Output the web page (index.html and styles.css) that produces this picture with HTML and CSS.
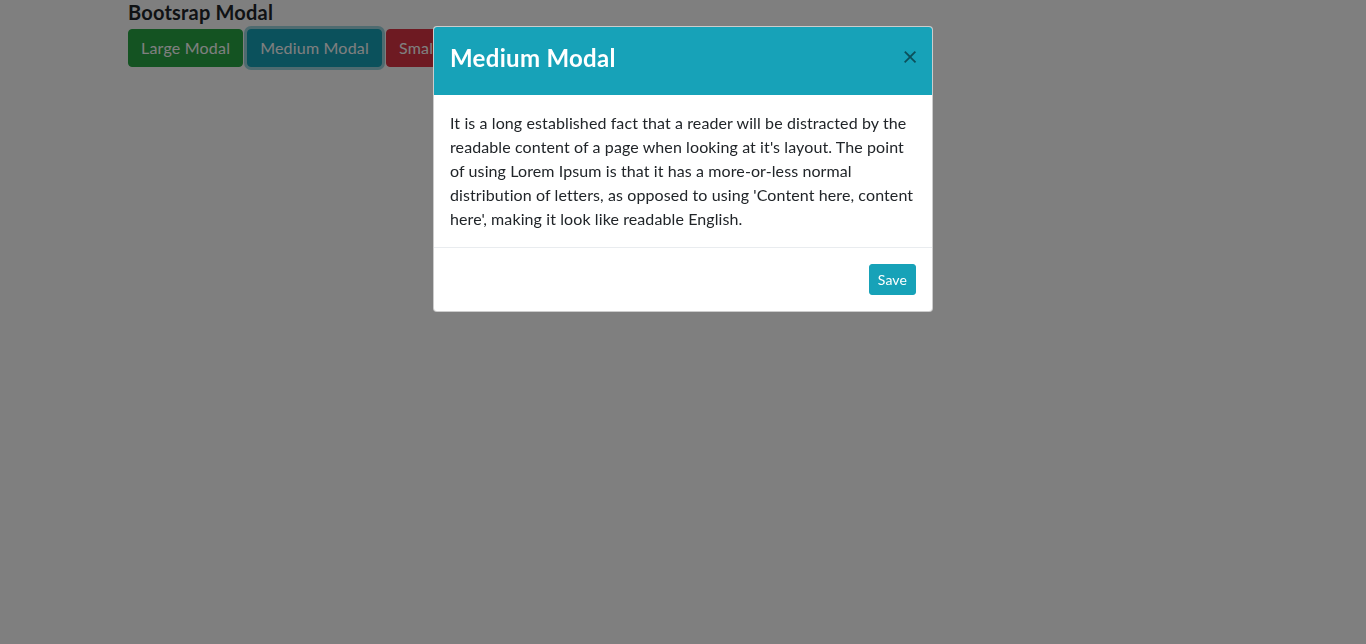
FILE: index.html
```html
<!DOCTYPE html>
<html lang="en">
<head>
<meta charset="utf-8">
<title>Bootstrap Modal</title>
<link rel="stylesheet" href="styles.css">
</head>
<body>
<div class="container">
  <h5 class="page-title">Bootsrap Modal</h5>
  <div class="btn-row">
    <button class="btn btn-success">Large Modal</button>
    <button class="btn btn-info focused">Medium Modal</button>
    <button class="btn btn-danger">Small Modal</button>
  </div>
</div>
<div class="backdrop"></div>
<div class="modal">
  <div class="modal-dialog">
    <div class="modal-content">
      <div class="modal-header">
        <h4 class="modal-title">Medium Modal</h4>
        <button class="close" aria-label="Close">&times;</button>
      </div>
      <div class="modal-body">
        <p>It is a long established fact that a reader will be distracted by the readable content of a page when looking at it's layout. The point of using Lorem Ipsum is that it has a more-or-less normal distribution of letters, as opposed to using 'Content here, content here', making it look like readable English.</p>
      </div>
      <div class="modal-footer">
        <button class="btn btn-info btn-sm">Save</button>
      </div>
    </div>
  </div>
</div>
</body>
</html>
```
FILE: styles.css
```css
* { box-sizing: border-box; }
html, body { margin: 0; padding: 0; }
body {
  font-family: Lato, "Open Sans", "Liberation Sans", sans-serif;
  font-size: 16px;
  line-height: 1.5;
  letter-spacing: .1px;
  color: #212529;
  background: #fff;
  height: 644px;
  overflow: hidden;
}
.container {
  max-width: 1140px;
  margin: 0 auto;
  padding: 0 15px;
}
.page-title {
  font-size: 20px;
  font-weight: 700;
  line-height: 1.2;
  letter-spacing: .2px;
  margin: 0 0 5px;
}
.btn-row { display: flex; gap: 4px; }
.btn {
  font-family: inherit;
  font-size: 16px;
  line-height: 1.5;
  letter-spacing: .2px;
  padding: 6px 12px;
  border: 1px solid transparent;
  border-radius: 4px;
  color: #fff;
  cursor: pointer;
}
.btn-success { background: #28a745; border-color: #28a745; }
.btn-info { background: #17a2b8; border-color: #17a2b8; }
.btn-danger { background: #dc3545; border-color: #dc3545; }
.focused { box-shadow: 0 0 0 3px rgba(58, 176, 195, .5); }
.btn-sm { font-size: 14px; padding: 4px 8px; line-height: 1.5; border-radius: 3px; letter-spacing: .1px; }
.backdrop {
  position: fixed; inset: 0;
  background: rgba(0, 0, 0, .5);
}
.modal {
  position: fixed; inset: 0;
}
.modal-dialog {
  max-width: 500px;
  margin: 26px auto;
}
.modal-content {
  background: #fff;
  border: 1px solid rgba(0, 0, 0, .2);
  border-radius: 4px;
  overflow: hidden;
}
.modal-header {
  display: flex;
  align-items: flex-start;
  justify-content: space-between;
  padding: 13px 16px 20px;
  background: #17a2b8;
  color: #fff;
}
.modal-title {
  margin: 0;
  font-size: 24px;
  font-weight: 700;
  line-height: 35px;
  letter-spacing: .3px;
}
.close {
  background: none;
  border: 0;
  padding: 16px;
  margin: -14px -18px -16px auto;
  font-family: inherit;
  font-size: 27px;
  font-weight: 400;
  line-height: 1;
  color: #000;
  opacity: .5;
  cursor: pointer;
}
.modal-body { padding: 16px; }
.modal-body p { margin: 0; }
.modal-footer {
  display: flex;
  justify-content: flex-end;
  padding: 12px;
  border-top: 1px solid #e9ecef;
}
.modal-footer .btn { margin: 4px; }
```
